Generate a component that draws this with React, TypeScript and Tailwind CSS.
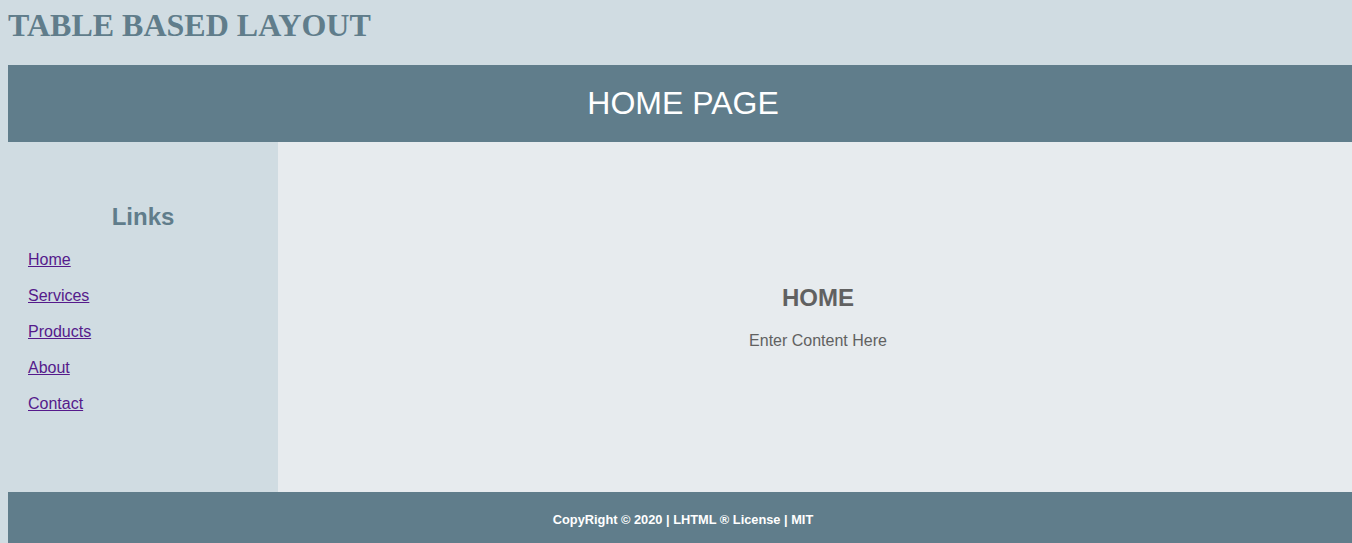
const links = ['Home', 'Services', 'Products', 'About', 'Contact'];

const App = () => {
  return (
    <div className="h-[543px] w-[1352px] overflow-hidden bg-[#d0dce2] font-['Liberation_Sans',Arial,sans-serif]">
      <div className="w-[1358px] pl-2">
        <h1 className="h-[65px] pt-[7px] font-['Liberation_Serif','Times_New_Roman',serif] text-[32px] leading-[37px] font-bold text-[#607d8b]">
          TABLE BASED LAYOUT
        </h1>

        <div className="flex h-[77px] items-center justify-center bg-[#607d8b]">
          <span className="text-[32px] leading-[37px] text-white">HOME PAGE</span>
        </div>

        <div className="flex h-[350px]">
          <div className="w-[270px] bg-[#d0dce2] pt-[61px]">
            <h2 className="text-center text-[24px] leading-[28px] font-bold text-[#607d8b]">
              Links
            </h2>
            <ul className="mt-[20px] flex flex-col gap-[18px] pl-5">
              {links.map((link) => (
                <li key={link} className="leading-[18px]">
                  <a
                    href="#"
                    className="text-[16px] leading-[18px] text-[#551a8b] underline"
                  >
                    {link}
                  </a>
                </li>
              ))}
            </ul>
          </div>

          <div className="flex flex-1 flex-col items-center justify-center bg-[#e7ebee] text-[#616161]">
            <h2 className="text-[24px] leading-[28px] font-bold">HOME</h2>
            <p className="mt-[20px] text-[16px] leading-[18px]">Enter Content Here</p>
          </div>
        </div>

        <div className="flex h-[54px] items-center justify-center bg-[#607d8b] pt-[2px]">
          <span className="text-[12.8px] font-bold text-white">
            CopyRight © 2020 | LHTML ® License | MIT
          </span>
        </div>
      </div>
    </div>
  );
};

export default App;
